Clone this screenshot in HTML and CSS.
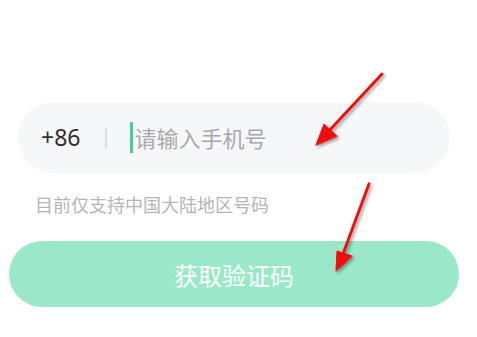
FILE: index.html
```html
<!DOCTYPE html>
<html lang="zh-CN">
<head>
<meta charset="utf-8">
<link rel="stylesheet" href="styles.css">
</head>
<body>
<div class="page">
  <div class="phone">
    <span class="code">+86</span>
    <span class="sep"></span>
    <span class="cursor"></span>
    <span class="placeholder">请输入手机号</span>
  </div>
  <div class="hint">目前仅支持中国大陆地区号码</div>
  <div class="btn">获取验证码</div>
  <svg class="arrows" width="477" height="337" viewBox="0 0 477 337" xmlns="http://www.w3.org/2000/svg">
    <defs>
      <filter id="sh" x="-30%" y="-30%" width="160%" height="160%">
        <feDropShadow dx="2" dy="2" stdDeviation="1.5" flood-color="#000" flood-opacity="0.35"/>
      </filter>
    </defs>
    <g filter="url(#sh)" fill="#f01010" stroke="#f01010" stroke-linecap="round" stroke-linejoin="round">
      <line x1="382" y1="74" x2="328" y2="132" stroke-width="3"/>
      <polygon points="316,145 324,124 337,136" stroke-width="1"/>
      <line x1="369" y1="184" x2="343" y2="254" stroke-width="3"/>
      <polygon points="336,271 337,251 352,256" stroke-width="1"/>
    </g>
  </svg>
</div>
</body>
</html>
```
FILE: styles.css
```css
html, body {
  margin: 0;
  padding: 0;
  background: #ffffff;
}
.page {
  position: relative;
  width: 477px;
  height: 337px;
  padding-top: 102px;
  box-sizing: border-box;
  font-family: "Noto Sans", "Noto Sans CJK SC", sans-serif;
  overflow: hidden;
}
.phone {
  margin: 0 27px 0 18px;
  height: 71px;
  border-radius: 36px;
  background: #f6f7f9;
  display: flex;
  align-items: center;
  padding-left: 23px;
}
.code {
  font-size: 23px;
  color: #2e2e30;
  line-height: 1;
}
.sep {
  width: 2px;
  height: 22px;
  background: #e0e0e2;
  margin: 0 23px 0 25px;
}
.cursor {
  width: 3px;
  height: 31px;
  background: #3ecf9b;
  margin-right: 1px;
}
.placeholder {
  font-size: 22px;
  color: #a9a9ab;
  line-height: 1;
}
.hint {
  margin: 23px 0 0 35px;
  font-size: 18px;
  line-height: 18px;
  color: #b5b5b7;
}
.btn {
  margin: 27px 18px 0 9px;
  height: 66px;
  border-radius: 33px;
  background: #9ae8c9;
  color: #ffffff;
  font-size: 24px;
  display: flex;
  align-items: center;
  justify-content: center;
}
.arrows {
  position: absolute;
  left: 0;
  top: 0;
  pointer-events: none;
}
```
